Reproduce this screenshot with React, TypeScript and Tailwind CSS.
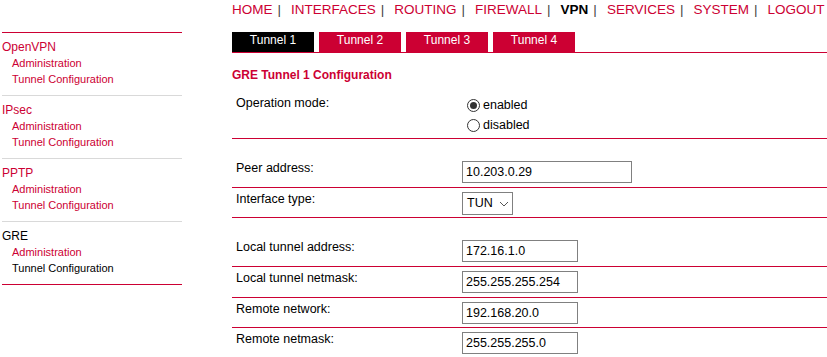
import React from "react";

const RED = "text-[#cc0033]";

const navItems = ["HOME", "INTERFACES", "ROUTING", "FIREWALL", "VPN", "SERVICES", "SYSTEM", "LOGOUT"];

const sections = [
  { name: "OpenVPN", active: false },
  { name: "IPsec", active: false },
  { name: "PPTP", active: false },
  { name: "GRE", active: true },
];

const tabs = ["Tunnel 1", "Tunnel 2", "Tunnel 3", "Tunnel 4"];

function Radio({ checked, label }: { checked: boolean; label: string }) {
  return (
    <div className="flex items-center h-[20px] ml-[5px]">
      <span className="w-[13px] h-[13px] rounded-full border border-[#333] bg-white flex items-center justify-center">
        {checked && <span className="w-[7px] h-[7px] rounded-full bg-[#333]" />}
      </span>
      <span className="ml-[3px] text-[12.5px] text-black">{label}</span>
    </div>
  );
}

function TextBox({ value, wide }: { value: string; wide?: boolean }) {
  return (
    <input
      readOnly
      value={value}
      className={`mt-[4px] h-[22px] ${wide ? "w-[170px]" : "w-[116px]"} border border-[#808080] px-[3px] text-[12.5px] text-black outline-none`}
    />
  );
}

function Row({ label, h, children }: { label: string; h: string; children: React.ReactNode }) {
  return (
    <div className={`flex ${h} border-b border-[#cc0033]`}>
      <div className="w-[230px] pl-[4px] pt-[3px] leading-[16px] text-[12.5px] text-black">{label}</div>
      <div>{children}</div>
    </div>
  );
}

export default function App() {
  return (
    <div className="flex w-[827px] h-[357px] overflow-hidden bg-white font-['Liberation_Sans',Arial,sans-serif]">
      {/* sidebar */}
      <aside className="w-[180px] ml-[2px] mt-[32px] shrink-0 border-t border-[#cc0033]">
        {sections.map((s, i) => (
          <div
            key={s.name}
            className={`pt-[6px] pb-[8px] border-b ${i === sections.length - 1 ? "border-[#cc0033]" : "border-[#d9d9d9]"}`}
          >
            <div className={`leading-[16px] text-[12px] ${s.active ? "text-black" : RED}`}>{s.name}</div>
            <div className={`pl-[10px] leading-[16px] text-[11px] ${RED}`}>Administration</div>
            <div className={`pl-[10px] leading-[16px] text-[11px] ${s.active ? "text-black" : RED}`}>Tunnel Configuration</div>
          </div>
        ))}
      </aside>

      {/* main */}
      <main className="ml-[50px] flex-1">
        <nav className="h-[32px] flex leading-[20px] text-[13.5px] whitespace-nowrap">
          {navItems.map((n, i) => (
            <span key={n} className="flex">
              <span className={n === "VPN" ? "text-black font-bold" : RED}>{n}</span>
              {i < navItems.length - 1 && <span className="ml-[5px] mr-[10px] text-[#444]">|</span>}
            </span>
          ))}
        </nav>

        <div className="flex gap-[5px] border-b border-[#cc0033]">
          {tabs.map((t, i) => (
            <div
              key={t}
              className={`w-[82px] h-[20px] text-center leading-[16px] text-[12px] text-white ${i === 0 ? "bg-black" : "bg-[#cc0033]"}`}
            >
              {t}
            </div>
          ))}
        </div>

        <div className={`mt-[14px] mb-[9px] leading-[16px] text-[12px] font-bold ${RED}`}>GRE Tunnel 1 Configuration</div>

        <Row label="Operation mode:" h="h-[47px]">
          <div className="pt-[3px]">
            <Radio checked label="enabled" />
            <Radio checked={false} label="disabled" />
          </div>
        </Row>
        <div className="h-[18px]" />
        <Row label="Peer address:" h="h-[31px]">
          <TextBox value="10.203.0.29" wide />
        </Row>
        <Row label="Interface type:" h="h-[30px]">
          <div className="mt-[4px] h-[23px] w-[51px] border border-[#808080] flex items-center justify-between pl-[4px] pr-[3px] text-[12.5px] text-black">
            <span>TUN</span>
            <svg width="10" height="6" viewBox="0 0 10 6">
              <polyline points="1,1 5,5 9,1" fill="none" stroke="#555" strokeWidth="1" />
            </svg>
          </div>
        </Row>
        <div className="h-[18px]" />
        <Row label="Local tunnel address:" h="h-[31px]">
          <TextBox value="172.16.1.0" />
        </Row>
        <Row label="Local tunnel netmask:" h="h-[31px]">
          <TextBox value="255.255.255.254" />
        </Row>
        <Row label="Remote network:" h="h-[30px]">
          <TextBox value="192.168.20.0" />
        </Row>
        <Row label="Remote netmask:" h="h-[31px]">
          <TextBox value="255.255.255.0" />
        </Row>
      </main>
    </div>
  );
}
